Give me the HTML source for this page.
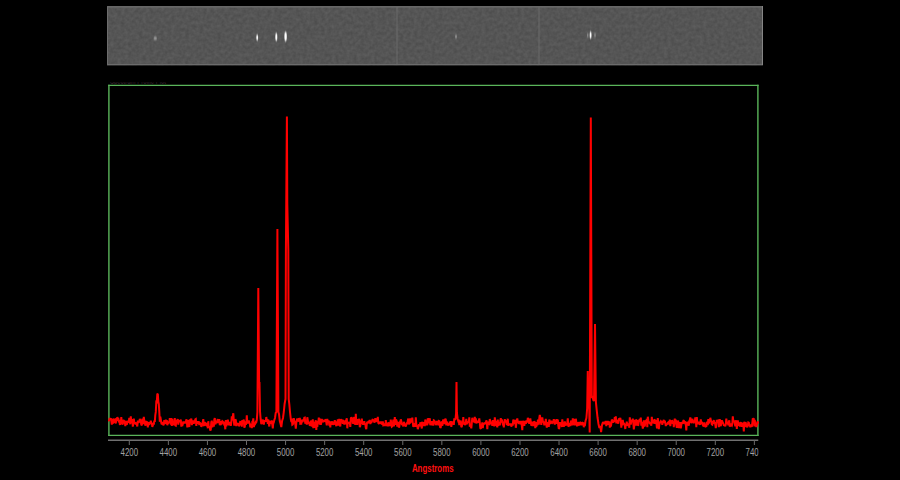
<!DOCTYPE html>
<html><head><meta charset="utf-8"><style>
html,body{margin:0;padding:0;background:#000;width:900px;height:480px;overflow:hidden}
svg{position:absolute;left:0;top:0}
text{font-family:"Liberation Sans",sans-serif}
</style></head><body>
<svg width="900" height="480" viewBox="0 0 900 480">
<defs>
<filter id="nz" x="0" y="0" width="100%" height="100%" color-interpolation-filters="sRGB">
<feTurbulence type="fractalNoise" baseFrequency="0.28" numOctaves="2" seed="5"/>
<feColorMatrix type="matrix" values="0.09 0 0 0 0.288  0.09 0 0 0 0.288  0.09 0 0 0 0.288  0 0 0 0 1"/>
<feComposite in2="SourceGraphic" operator="in"/>
</filter>
<filter id="bl" x="-2" y="-2" width="5" height="5"><feGaussianBlur stdDeviation="0.45 0.9"/></filter>
<clipPath id="plot"><rect x="108" y="85" width="651" height="351"/></clipPath>
<clipPath id="tt"><rect x="108" y="82" width="60" height="2.6"/></clipPath>
<clipPath id="ax"><rect x="100" y="439" width="658.5" height="30"/></clipPath>
</defs>
<rect x="107" y="6" width="656" height="59.5" fill="#555555" filter="url(#nz)"/>
<rect x="107.5" y="7" width="655" height="57.5" fill="none" stroke="#6c6c6c" stroke-width="1"/>
<line x1="107" y1="6.5" x2="763" y2="6.5" stroke="#666" stroke-width="1"/>
<line x1="762.5" y1="6" x2="762.5" y2="65" stroke="#858585" stroke-width="1"/>
<line x1="397" y1="7" x2="397" y2="64" stroke="#6a6a6a" stroke-width="1"/>
<line x1="539" y1="7" x2="539" y2="64" stroke="#6a6a6a" stroke-width="1"/>
<g filter="url(#bl)" fill="#fff">
<ellipse cx="155.3" cy="38.2" rx="1.6" ry="1.7" fill="#a0a0a0"/>
<ellipse cx="257.2" cy="37.6" rx="0.9" ry="3.2" />
<ellipse cx="276.3" cy="37.1" rx="1.0" ry="4.0" />
<ellipse cx="285.6" cy="36.6" rx="1.2" ry="4.8" />
<ellipse cx="456" cy="36.6" rx="0.9" ry="1.8" fill="#a0a0a0"/>
<ellipse cx="590.6" cy="35.2" rx="0.9" ry="3.6" />
<ellipse cx="587.8" cy="35.2" rx="0.6" ry="2.2" fill="#9a9a9a"/>
<ellipse cx="595" cy="35.2" rx="0.6" ry="2.2" fill="#a0a0a0"/>
</g>
<text x="110" y="84.3" font-size="11" fill="#35222e" clip-path="url(#tt)" textLength="56" lengthAdjust="spacingAndGlyphs">Spectrum Profile Plot</text>
<g stroke="#5ab55a" stroke-width="1.4"><line x1="108.2" y1="85.4" x2="758.6" y2="85.4"/><line x1="108.2" y1="435.4" x2="758.6" y2="435.4"/><line x1="108.9" y1="84.7" x2="108.9" y2="436.1"/><line x1="757.9" y1="84.7" x2="757.9" y2="436.1"/></g>
<g clip-path="url(#plot)">
<polyline points="108.30,420.0 108.80,420.9 109.30,419.6 109.80,418.1 110.30,419.4 110.80,418.1 111.30,421.1 111.80,424.6 112.30,419.8 112.80,419.5 113.30,422.6 113.80,422.2 114.30,421.6 114.80,418.8 115.30,421.4 115.80,423.4 116.30,418.1 116.80,420.7 117.30,417.1 117.80,419.0 118.30,417.8 118.80,422.4 119.30,419.8 119.80,424.1 120.30,424.0 120.80,423.2 121.30,417.1 121.80,422.5 122.30,423.9 122.80,424.3 123.30,419.8 123.80,422.5 124.30,421.0 124.80,421.3 125.30,426.1 125.80,420.9 126.30,422.8 126.80,425.0 127.30,420.8 127.80,421.8 128.30,422.0 128.80,421.6 129.30,417.8 129.80,421.0 130.30,424.3 130.80,416.4 131.30,422.9 131.80,421.0 132.30,419.1 132.80,426.6 133.30,423.6 133.80,418.6 134.30,422.4 134.80,424.0 135.30,422.1 135.80,424.5 136.30,422.5 136.80,424.4 137.30,426.4 137.80,420.6 138.30,422.9 138.80,421.0 139.30,422.5 139.80,418.9 140.30,420.6 140.80,421.7 141.30,424.7 141.80,425.4 142.30,418.7 142.80,420.1 143.30,424.0 143.80,416.8 144.30,420.9 144.80,421.9 145.30,425.7 145.80,424.3 146.30,421.8 146.80,421.9 147.30,422.5 147.80,427.5 148.30,422.4 148.80,422.9 149.30,424.8 149.80,423.5 150.30,423.2 150.80,420.7 151.30,423.7 151.80,422.5 152.30,426.9 152.80,425.5 153.30,423.5 153.80,424.7 154.30,420.6 154.80,421.8 155.30,415.2 155.80,411.9 156.30,401.8 156.80,402.0 157.30,394.2 157.80,393.8 158.30,401.3 158.80,404.2 159.30,411.9 159.80,421.8 160.30,416.8 160.80,419.5 161.30,423.0 161.80,424.4 162.30,422.9 162.80,422.8 163.30,425.2 163.80,424.5 164.30,420.1 164.80,422.5 165.30,422.8 165.80,419.7 166.30,423.2 166.80,420.2 167.30,425.2 167.80,423.2 168.30,423.1 168.80,421.5 169.30,422.9 169.80,418.1 170.30,420.6 170.80,424.7 171.30,418.0 171.80,426.0 172.30,418.9 172.80,425.5 173.30,420.9 173.80,425.0 174.30,423.0 174.80,418.1 175.30,425.3 175.80,425.6 176.30,421.4 176.80,420.8 177.30,421.1 177.80,419.0 178.30,424.7 178.80,420.5 179.30,422.1 179.80,420.4 180.30,421.1 180.80,419.6 181.30,426.7 181.80,423.0 182.30,426.1 182.80,423.6 183.30,421.6 183.80,422.6 184.30,421.9 184.80,423.3 185.30,422.2 185.80,422.3 186.30,419.4 186.80,420.8 187.30,427.4 187.80,421.2 188.30,420.2 188.80,424.0 189.30,427.0 189.80,419.4 190.30,422.8 190.80,421.6 191.30,418.5 191.80,425.1 192.30,422.8 192.80,422.9 193.30,420.5 193.80,423.7 194.30,420.9 194.80,421.9 195.30,419.3 195.80,419.0 196.30,426.0 196.80,421.1 197.30,423.4 197.80,422.7 198.30,421.9 198.80,421.9 199.30,425.1 199.80,422.8 200.30,423.3 200.80,423.9 201.30,426.9 201.80,425.4 202.30,424.4 202.80,421.6 203.30,419.1 203.80,425.2 204.30,425.1 204.80,422.1 205.30,424.0 205.80,424.9 206.30,425.3 206.80,425.9 207.30,422.6 207.80,428.3 208.30,421.2 208.80,427.2 209.30,426.5 209.80,427.7 210.30,430.5 210.80,429.4 211.30,422.3 211.80,420.7 212.30,427.3 212.80,422.2 213.30,424.6 213.80,426.6 214.30,419.6 214.80,418.0 215.30,424.1 215.80,423.3 216.30,422.4 216.80,423.1 217.30,420.7 217.80,419.1 218.30,422.9 218.80,420.9 219.30,419.2 219.80,425.1 220.30,423.7 220.80,425.0 221.30,421.2 221.80,422.1 222.30,421.1 222.80,421.5 223.30,424.4 223.80,421.7 224.30,424.8 224.80,424.8 225.30,429.3 225.80,420.0 226.30,426.2 226.80,423.4 227.30,423.6 227.80,419.6 228.30,422.2 228.80,425.4 229.30,423.0 229.80,423.3 230.30,422.2 230.80,425.9 231.30,422.5 231.80,416.4 232.30,420.3 232.80,416.7 233.30,413.2 233.80,420.6 234.30,425.7 234.80,422.4 235.30,419.4 235.80,420.2 236.30,426.1 236.80,423.7 237.30,423.7 237.80,423.6 238.30,423.9 238.80,426.1 239.30,425.4 239.80,424.5 240.30,421.0 240.80,425.2 241.30,421.9 241.80,426.6 242.30,420.0 242.80,423.0 243.30,423.2 243.80,419.5 244.30,427.6 244.80,426.7 245.30,421.4 245.80,424.6 246.30,423.5 246.80,415.4 247.30,423.2 247.80,422.6 248.30,423.2 248.80,420.4 249.30,422.9 249.80,423.4 250.30,427.3 250.80,425.1 251.30,424.2 251.80,428.2 252.30,422.3 252.80,422.5 253.30,418.3 253.80,427.0 254.30,425.0 254.80,424.6 255.30,423.6 255.80,421.9 256.30,422.1 256.80,420.0 257.40,412.0 258.30,288.0 259.10,383.0 259.50,383.0 260.00,411.0 260.60,419.0 261.30,424.0 261.80,422.8 262.30,421.7 262.80,419.6 263.30,422.3 263.80,424.6 264.30,421.0 264.80,421.2 265.30,421.0 265.80,421.7 266.30,417.0 266.80,420.7 267.30,419.1 267.80,424.0 268.30,419.7 268.80,423.6 269.30,426.5 269.80,421.7 270.30,421.2 270.80,423.5 271.30,423.0 271.80,420.4 272.30,424.3 272.80,428.5 273.30,422.3 273.80,422.4 274.30,420.1 275.00,418.0 275.70,413.0 276.40,412.0 277.40,229.0 278.40,412.0 279.00,414.0 279.80,421.0 280.60,424.0 281.30,427.0 282.10,421.0 283.00,418.0 283.80,412.0 284.60,404.0 285.50,399.0 285.90,250.0 286.90,116.5 287.30,204.0 288.30,250.0 288.70,399.0 289.30,404.0 290.00,412.0 290.80,419.0 291.40,422.0 291.80,418.5 292.30,424.7 292.80,424.4 293.30,422.3 293.80,418.2 294.30,421.8 294.80,421.0 295.30,424.5 295.80,428.7 296.30,423.0 296.80,420.0 297.30,418.7 297.80,421.4 298.30,420.9 298.80,418.1 299.30,421.4 299.80,417.8 300.30,423.9 300.80,423.8 301.30,423.8 301.80,419.6 302.30,422.3 302.80,420.6 303.30,420.0 303.80,420.3 304.30,417.8 304.80,417.6 305.30,423.7 305.80,421.2 306.30,422.4 306.80,424.6 307.30,417.3 307.80,420.1 308.30,422.8 308.80,423.7 309.30,421.9 309.80,426.0 310.30,424.1 310.80,420.6 311.30,421.6 311.80,426.5 312.30,425.7 312.80,419.4 313.30,428.1 313.80,425.9 314.30,427.7 314.80,422.8 315.30,422.8 315.80,420.3 316.30,430.0 316.80,422.4 317.30,427.0 317.80,420.8 318.30,422.8 318.80,417.7 319.30,421.1 319.80,424.7 320.30,418.6 320.80,424.8 321.30,422.8 321.80,419.1 322.30,420.7 322.80,420.9 323.30,422.1 323.80,420.9 324.30,420.2 324.80,421.8 325.30,420.0 325.80,419.3 326.30,422.7 326.80,425.3 327.30,418.8 327.80,423.0 328.30,421.3 328.80,420.5 329.30,425.6 329.80,422.0 330.30,427.5 330.80,421.4 331.30,424.6 331.80,422.9 332.30,421.3 332.80,424.9 333.30,422.8 333.80,424.7 334.30,423.0 334.80,420.2 335.30,423.0 335.80,423.5 336.30,426.2 336.80,421.3 337.30,423.8 337.80,419.3 338.30,425.7 338.80,421.0 339.30,418.9 339.80,423.5 340.30,426.5 340.80,419.2 341.30,420.2 341.80,421.0 342.30,419.9 342.80,423.9 343.30,420.7 343.80,421.0 344.30,424.6 344.80,421.1 345.30,424.4 345.80,420.7 346.30,420.1 346.80,418.4 347.30,428.3 347.80,422.3 348.30,423.6 348.80,422.7 349.30,422.9 349.80,422.3 350.30,427.0 350.80,418.8 351.30,417.2 351.80,418.5 352.30,417.5 352.80,423.0 353.30,423.1 353.80,418.3 354.30,417.2 354.80,420.1 355.30,425.0 355.80,413.8 356.30,423.1 356.80,419.0 357.30,425.0 357.80,419.5 358.30,421.9 358.80,418.9 359.30,420.5 359.80,427.1 360.30,425.7 360.80,422.6 361.30,421.4 361.80,418.7 362.30,422.9 362.80,423.9 363.30,423.8 363.80,423.9 364.30,421.2 364.80,424.1 365.30,424.2 365.80,427.7 366.30,429.1 366.80,423.6 367.30,421.7 367.80,423.4 368.30,421.8 368.80,421.2 369.30,422.8 369.80,419.9 370.30,424.1 370.80,422.0 371.30,422.8 371.80,421.5 372.30,419.9 372.80,419.2 373.30,421.1 373.80,420.3 374.30,422.4 374.80,421.7 375.30,418.1 375.80,422.0 376.30,418.3 376.80,420.4 377.30,421.4 377.80,416.9 378.30,423.1 378.80,423.5 379.30,423.0 379.80,422.5 380.30,422.9 380.80,421.5 381.30,423.5 381.80,422.9 382.30,424.7 382.80,421.3 383.30,425.3 383.80,425.1 384.30,424.3 384.80,423.5 385.30,426.1 385.80,420.1 386.30,425.8 386.80,425.1 387.30,425.2 387.80,425.4 388.30,422.5 388.80,423.5 389.30,425.8 389.80,425.1 390.30,424.4 390.80,419.6 391.30,425.1 391.80,426.7 392.30,426.3 392.80,424.3 393.30,419.5 393.80,426.3 394.30,423.5 394.80,417.0 395.30,424.9 395.80,419.7 396.30,420.1 396.80,421.7 397.30,426.7 397.80,422.0 398.30,423.5 398.80,427.3 399.30,426.8 399.80,422.2 400.30,422.0 400.80,419.4 401.30,421.1 401.80,424.4 402.30,424.5 402.80,424.0 403.30,426.5 403.80,421.8 404.30,423.7 404.80,425.8 405.30,425.3 405.80,426.5 406.30,424.6 406.80,422.6 407.30,424.2 407.80,420.4 408.30,418.6 408.80,424.5 409.30,422.7 409.80,423.7 410.30,418.3 410.80,422.1 411.30,421.6 411.80,421.2 412.30,417.7 412.80,423.2 413.30,426.8 413.80,425.6 414.30,423.1 414.80,424.7 415.30,426.8 415.80,417.3 416.30,424.4 416.80,426.1 417.30,426.4 417.80,429.1 418.30,427.4 418.80,425.1 419.30,424.9 419.80,426.1 420.30,422.4 420.80,423.6 421.30,425.9 421.80,428.5 422.30,422.6 422.80,422.7 423.30,423.1 423.80,426.0 424.30,422.2 424.80,426.2 425.30,419.6 425.80,421.7 426.30,421.7 426.80,424.4 427.30,425.1 427.80,418.2 428.30,419.8 428.80,423.2 429.30,420.5 429.80,418.2 430.30,425.2 430.80,423.7 431.30,423.8 431.80,421.2 432.30,425.4 432.80,422.0 433.30,425.7 433.80,420.4 434.30,420.7 434.80,423.6 435.30,421.3 435.80,425.1 436.30,424.0 436.80,420.9 437.30,423.5 437.80,422.2 438.30,425.4 438.80,421.0 439.30,421.2 439.80,425.4 440.30,427.9 440.80,427.1 441.30,421.8 441.80,422.2 442.30,425.9 442.80,421.6 443.30,419.5 443.80,422.7 444.30,423.9 444.80,420.7 445.30,418.7 445.80,419.5 446.30,425.3 446.80,421.6 447.30,423.3 447.80,424.4 448.30,425.6 448.80,423.1 449.30,425.4 449.80,421.7 450.30,423.1 450.80,421.2 451.30,426.9 451.80,423.6 452.30,421.5 452.80,422.4 453.30,422.5 453.80,424.8 454.30,418.3 454.80,419.6 455.50,419.0 456.10,413.0 456.50,382.0 456.90,413.0 457.70,419.0 458.30,421.2 458.80,420.9 459.30,425.1 459.80,423.2 460.30,423.7 460.80,420.5 461.30,427.1 461.80,426.6 462.30,423.7 462.80,424.2 463.30,417.0 463.80,424.4 464.30,422.3 464.80,424.2 465.30,425.0 465.80,422.3 466.30,418.8 466.80,424.4 467.30,421.5 467.80,422.7 468.30,422.0 468.80,422.7 469.30,417.3 469.80,426.8 470.30,424.0 470.80,426.2 471.30,428.3 471.80,422.9 472.30,417.8 472.80,420.1 473.30,419.1 473.80,420.9 474.30,422.4 474.80,416.8 475.30,423.2 475.80,418.3 476.30,423.3 476.80,422.4 477.30,421.9 477.80,422.6 478.30,421.3 478.80,421.2 479.30,418.4 479.80,422.9 480.30,428.2 480.80,428.8 481.30,427.3 481.80,425.9 482.30,422.4 482.80,428.2 483.30,424.3 483.80,424.2 484.30,423.5 484.80,424.3 485.30,422.7 485.80,423.4 486.30,420.4 486.80,422.1 487.30,429.1 487.80,422.6 488.30,421.9 488.80,423.8 489.30,424.1 489.80,419.0 490.30,421.3 490.80,424.2 491.30,422.4 491.80,422.0 492.30,425.9 492.80,420.0 493.30,422.2 493.80,420.7 494.30,426.4 494.80,417.4 495.30,421.1 495.80,421.7 496.30,425.1 496.80,425.1 497.30,427.4 497.80,419.5 498.30,425.9 498.80,423.1 499.30,422.2 499.80,425.4 500.30,421.4 500.80,418.2 501.30,422.7 501.80,419.5 502.30,421.6 502.80,424.2 503.30,424.0 503.80,427.4 504.30,422.7 504.80,419.2 505.30,421.5 505.80,421.2 506.30,420.6 506.80,425.2 507.30,422.3 507.80,418.7 508.30,425.9 508.80,423.6 509.30,424.7 509.80,423.9 510.30,425.2 510.80,423.5 511.30,426.7 511.80,424.5 512.30,424.4 512.80,424.5 513.30,419.5 513.80,423.0 514.30,422.7 514.80,424.0 515.30,419.8 515.80,427.8 516.30,423.6 516.80,419.9 517.30,418.5 517.80,422.3 518.30,422.7 518.80,420.9 519.30,423.1 519.80,421.1 520.30,424.3 520.80,420.9 521.30,422.8 521.80,425.7 522.30,430.2 522.80,420.7 523.30,422.3 523.80,421.5 524.30,425.9 524.80,420.8 525.30,422.6 525.80,423.8 526.30,421.2 526.80,421.2 527.30,422.4 527.80,417.9 528.30,419.5 528.80,422.2 529.30,423.6 529.80,422.6 530.30,418.4 530.80,422.0 531.30,425.6 531.80,425.1 532.30,423.6 532.80,421.7 533.30,426.0 533.80,422.8 534.30,421.3 534.80,422.3 535.30,428.2 535.80,424.7 536.30,426.9 536.80,422.1 537.30,425.5 537.80,420.4 538.30,420.0 538.80,424.7 539.30,418.2 539.80,414.9 540.30,418.0 540.80,421.2 541.30,424.8 541.80,420.6 542.30,417.3 542.80,421.2 543.30,421.9 543.80,422.1 544.30,425.3 544.80,422.6 545.30,424.0 545.80,418.9 546.30,424.3 546.80,427.7 547.30,424.2 547.80,422.9 548.30,422.6 548.80,426.9 549.30,419.5 549.80,421.6 550.30,423.1 550.80,423.9 551.30,420.7 551.80,422.8 552.30,421.3 552.80,422.5 553.30,421.9 553.80,419.2 554.30,422.2 554.80,424.6 555.30,419.5 555.80,421.4 556.30,423.8 556.80,419.2 557.30,422.7 557.80,419.5 558.30,425.6 558.80,428.9 559.30,428.2 559.80,422.2 560.30,424.9 560.80,423.2 561.30,423.1 561.80,427.0 562.30,419.3 562.80,425.7 563.30,422.8 563.80,426.8 564.30,423.6 564.80,421.5 565.30,424.2 565.80,425.6 566.30,423.8 566.80,425.2 567.30,422.6 567.80,418.3 568.30,426.5 568.80,425.9 569.30,424.2 569.80,423.8 570.30,426.1 570.80,421.8 571.30,420.8 571.80,421.9 572.30,425.4 572.80,418.3 573.30,425.2 573.80,420.2 574.30,419.0 574.80,425.4 575.30,421.9 575.80,418.8 576.30,421.6 576.80,425.3 577.30,426.2 577.80,422.0 578.30,424.5 578.80,425.5 579.30,422.0 579.80,424.9 580.30,424.0 580.80,422.7 581.30,423.0 581.80,424.5 582.30,424.5 582.80,422.9 583.30,423.2 583.80,427.2 584.30,424.5 584.80,426.1 585.50,421.0 586.40,418.0 587.20,408.0 587.75,371.0 588.30,402.0 589.00,399.0 589.70,432.5 590.80,117.5 591.80,398.0 592.60,396.0 593.30,400.0 594.00,401.0 595.00,324.0 595.90,402.0 596.70,410.0 597.60,418.0 598.50,424.0 599.40,428.0 600.30,426.0 601.10,432.0 602.00,425.0 603.00,422.0 604.00,424.0 604.80,422.7 605.30,423.5 605.80,420.9 606.30,426.1 606.80,422.3 607.30,424.5 607.80,420.9 608.30,423.9 608.80,423.8 609.30,421.4 609.80,427.7 610.30,423.0 610.80,426.6 611.30,424.2 611.80,419.7 612.30,420.4 612.80,422.6 613.30,421.6 613.80,421.7 614.30,421.0 614.80,417.1 615.30,421.5 615.80,416.3 616.30,423.4 616.80,420.6 617.30,420.7 617.80,422.2 618.30,423.7 618.80,419.2 619.30,418.5 619.80,420.4 620.30,417.8 620.80,420.8 621.30,427.8 621.80,420.7 622.30,425.3 622.80,419.9 623.30,424.5 623.80,423.0 624.30,423.8 624.80,425.6 625.30,429.0 625.80,424.9 626.30,424.7 626.80,421.7 627.30,425.8 627.80,423.4 628.30,426.0 628.80,423.3 629.30,427.8 629.80,417.4 630.30,421.7 630.80,424.6 631.30,421.2 631.80,420.0 632.30,421.4 632.80,418.6 633.30,422.8 633.80,429.3 634.30,426.0 634.80,420.0 635.30,420.6 635.80,421.8 636.30,425.5 636.80,420.5 637.30,420.8 637.80,425.0 638.30,425.1 638.80,421.9 639.30,420.1 639.80,419.1 640.30,421.6 640.80,417.5 641.30,425.6 641.80,421.9 642.30,424.9 642.80,428.6 643.30,426.7 643.80,420.3 644.30,425.7 644.80,426.5 645.30,421.3 645.80,420.7 646.30,422.9 646.80,418.9 647.30,427.2 647.80,416.7 648.30,420.2 648.80,422.4 649.30,422.5 649.80,423.5 650.30,423.7 650.80,422.3 651.30,425.8 651.80,416.8 652.30,422.5 652.80,420.4 653.30,422.6 653.80,422.7 654.30,419.5 654.80,420.1 655.30,423.9 655.80,422.7 656.30,419.9 656.80,427.3 657.30,428.2 657.80,418.1 658.30,423.1 658.80,429.1 659.30,424.6 659.80,423.1 660.30,422.0 660.80,421.2 661.30,422.1 661.80,421.2 662.30,424.8 662.80,421.7 663.30,421.7 663.80,419.8 664.30,423.0 664.80,420.8 665.30,422.8 665.80,426.0 666.30,424.2 666.80,424.4 667.30,423.9 667.80,422.9 668.30,422.3 668.80,421.7 669.30,424.5 669.80,419.5 670.30,426.1 670.80,422.6 671.30,420.6 671.80,421.5 672.30,421.2 672.80,423.8 673.30,421.8 673.80,427.2 674.30,422.3 674.80,418.6 675.30,423.0 675.80,419.6 676.30,424.9 676.80,427.7 677.30,426.3 677.80,420.6 678.30,421.7 678.80,428.1 679.30,423.6 679.80,422.3 680.30,424.8 680.80,428.4 681.30,425.1 681.80,422.1 682.30,422.8 682.80,423.9 683.30,420.9 683.80,420.2 684.30,423.6 684.80,421.2 685.30,423.8 685.80,424.4 686.30,430.4 686.80,421.7 687.30,423.4 687.80,423.0 688.30,424.3 688.80,425.6 689.30,421.1 689.80,419.9 690.30,417.4 690.80,419.2 691.30,423.1 691.80,421.7 692.30,418.8 692.80,420.6 693.30,421.8 693.80,423.2 694.30,420.4 694.80,421.5 695.30,417.4 695.80,419.5 696.30,427.2 696.80,417.1 697.30,422.4 697.80,424.1 698.30,422.7 698.80,421.7 699.30,423.8 699.80,424.1 700.30,424.0 700.80,419.3 701.30,424.0 701.80,422.1 702.30,422.9 702.80,424.9 703.30,425.9 703.80,426.4 704.30,422.4 704.80,426.0 705.30,426.5 705.80,426.2 706.30,426.8 706.80,422.6 707.30,422.5 707.80,425.1 708.30,419.2 708.80,423.4 709.30,421.3 709.80,421.7 710.30,417.8 710.80,419.9 711.30,422.1 711.80,424.4 712.30,424.7 712.80,421.8 713.30,421.6 713.80,420.1 714.30,423.6 714.80,422.2 715.30,424.8 715.80,428.2 716.30,423.6 716.80,419.8 717.30,421.6 717.80,420.0 718.30,420.6 718.80,427.2 719.30,424.1 719.80,419.1 720.30,424.7 720.80,426.2 721.30,421.6 721.80,420.5 722.30,421.3 722.80,422.8 723.30,423.7 723.80,425.2 724.30,425.4 724.80,425.5 725.30,426.1 725.80,424.4 726.30,418.6 726.80,422.5 727.30,423.7 727.80,421.9 728.30,425.4 728.80,421.9 729.30,420.4 729.80,426.7 730.30,424.6 730.80,423.4 731.30,425.3 731.80,425.7 732.30,423.8 732.80,416.3 733.30,421.2 733.80,421.9 734.30,420.5 734.80,423.7 735.30,426.4 735.80,421.9 736.30,420.2 736.80,428.9 737.30,422.3 737.80,420.4 738.30,424.6 738.80,425.3 739.30,422.4 739.80,426.7 740.30,423.3 740.80,422.2 741.30,425.2 741.80,426.7 742.30,422.7 742.80,425.1 743.30,423.8 743.80,431.4 744.30,421.7 744.80,427.2 745.30,423.3 745.80,423.1 746.30,425.5 746.80,426.1 747.30,427.3 747.80,424.9 748.30,422.4 748.80,422.6 749.30,425.3 749.80,425.3 750.30,427.3 750.80,424.4 751.30,425.9 751.80,426.9 752.30,423.0 752.80,418.4 753.30,419.1 753.80,418.3 754.30,426.5 754.80,419.9 755.30,425.6 755.80,423.9 756.30,427.0 756.80,425.2 757.30,422.3 757.80,422.1 758.30,422.9 758.80,423.2" fill="none" stroke="#ff0000" stroke-width="2" stroke-linejoin="miter" stroke-miterlimit="2"/>
</g>
<g clip-path="url(#ax)">
<line x1="108" y1="440.2" x2="758.5" y2="440.2" stroke="#707070" stroke-width="1.6"/>
<g stroke="#6a6a6a" stroke-width="1"><line x1="129.30" y1="440" x2="129.30" y2="445"/><line x1="168.37" y1="440" x2="168.37" y2="445"/><line x1="207.43" y1="440" x2="207.43" y2="445"/><line x1="246.50" y1="440" x2="246.50" y2="445"/><line x1="285.57" y1="440" x2="285.57" y2="445"/><line x1="324.63" y1="440" x2="324.63" y2="445"/><line x1="363.70" y1="440" x2="363.70" y2="445"/><line x1="402.77" y1="440" x2="402.77" y2="445"/><line x1="441.83" y1="440" x2="441.83" y2="445"/><line x1="480.90" y1="440" x2="480.90" y2="445"/><line x1="519.97" y1="440" x2="519.97" y2="445"/><line x1="559.03" y1="440" x2="559.03" y2="445"/><line x1="598.10" y1="440" x2="598.10" y2="445"/><line x1="637.17" y1="440" x2="637.17" y2="445"/><line x1="676.23" y1="440" x2="676.23" y2="445"/><line x1="715.30" y1="440" x2="715.30" y2="445"/><line x1="754.37" y1="440" x2="754.37" y2="445"/></g>
</g>
<g fill="#a2a2a2" font-size="11" text-anchor="middle" clip-path="url(#ax)"><text x="129.30" y="456" textLength="17.5" lengthAdjust="spacingAndGlyphs">4200</text><text x="168.37" y="456" textLength="17.5" lengthAdjust="spacingAndGlyphs">4400</text><text x="207.43" y="456" textLength="17.5" lengthAdjust="spacingAndGlyphs">4600</text><text x="246.50" y="456" textLength="17.5" lengthAdjust="spacingAndGlyphs">4800</text><text x="285.57" y="456" textLength="17.5" lengthAdjust="spacingAndGlyphs">5000</text><text x="324.63" y="456" textLength="17.5" lengthAdjust="spacingAndGlyphs">5200</text><text x="363.70" y="456" textLength="17.5" lengthAdjust="spacingAndGlyphs">5400</text><text x="402.77" y="456" textLength="17.5" lengthAdjust="spacingAndGlyphs">5600</text><text x="441.83" y="456" textLength="17.5" lengthAdjust="spacingAndGlyphs">5800</text><text x="480.90" y="456" textLength="17.5" lengthAdjust="spacingAndGlyphs">6000</text><text x="519.97" y="456" textLength="17.5" lengthAdjust="spacingAndGlyphs">6200</text><text x="559.03" y="456" textLength="17.5" lengthAdjust="spacingAndGlyphs">6400</text><text x="598.10" y="456" textLength="17.5" lengthAdjust="spacingAndGlyphs">6600</text><text x="637.17" y="456" textLength="17.5" lengthAdjust="spacingAndGlyphs">6800</text><text x="676.23" y="456" textLength="17.5" lengthAdjust="spacingAndGlyphs">7000</text><text x="715.30" y="456" textLength="17.5" lengthAdjust="spacingAndGlyphs">7200</text><text x="754.37" y="456" textLength="17.5" lengthAdjust="spacingAndGlyphs">7400</text></g>
<text x="432.75" y="471.7" fill="#ff1010" font-size="11" font-weight="bold" text-anchor="middle" textLength="41.7" lengthAdjust="spacingAndGlyphs">Angstroms</text>
</svg>
</body></html>
